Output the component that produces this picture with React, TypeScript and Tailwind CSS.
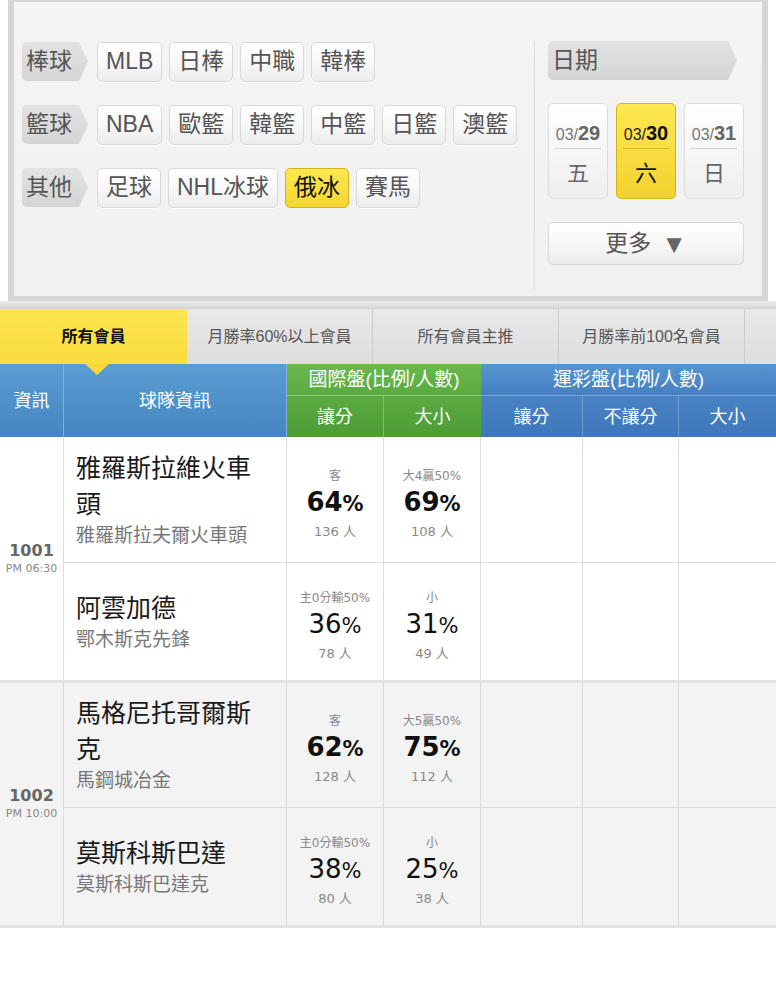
import React from "react";

const btn =
  "h-[40px] px-[8px] flex items-center justify-center border border-[#d9d9d9] rounded-[5px] bg-linear-to-b from-[#ffffff] via-[#f8f8f8] to-[#ececec] text-[23px] leading-none text-[#555] shadow-[0_1px_0_rgba(255,255,255,0.9)]";
const btnOn =
  "h-[40px] px-[8px] flex items-center justify-center border border-[#d4b21c] rounded-[5px] bg-linear-to-b from-[#fde84f] to-[#f5d531] text-[23px] leading-none text-[#111]";

function Tag({ label, wide }: { label: string; wide?: boolean }) {
  return (
    <div
      className={
        (wide ? "w-[189px] " : "w-[66px] ") +
        "h-[39px] shrink-0 flex items-center pl-[4px] bg-linear-to-b from-[#e2e2e2] to-[#d5d5d5] rounded-l-[5px] text-[23px] leading-none text-[#555] [clip-path:polygon(0_0,calc(100%-9px)_0,100%_50%,calc(100%-9px)_100%,0_100%)]"
      }
    >
      {label}
    </div>
  );
}

function Row({ label, items, active }: { label: string; items: string[]; active?: string }) {
  return (
    <div className="flex items-center gap-[7px] h-[41px]">
      <div className="mr-[2px]">
        <Tag label={label} />
      </div>
      {items.map((it) => (
        <div key={it} className={it === active ? btnOn : btn}>
          {it}
        </div>
      ))}
    </div>
  );
}

function DateBtn({ md, d, wd, on }: { md: string; d: string; wd: string; on?: boolean }) {
  return (
    <div
      className={
        "w-[60px] h-[96px] rounded-[5px] border flex flex-col overflow-hidden " +
        (on
          ? "border-[#d4b21c] bg-linear-to-b from-[#fde84f] to-[#f4d22f]"
          : "border-[#dcdcdc] bg-linear-to-b from-[#ffffff] to-[#eeeeee]")
      }
    >
      <div className="h-[44px] flex items-end justify-center pb-[5px] font-['Liberation_Sans',sans-serif] leading-none">
        <span className={"text-[16px] " + (on ? "text-[#222]" : "text-[#777]")}>{md}</span>
        <span className={"text-[20px] font-bold " + (on ? "text-[#111]" : "text-[#666]")}>{d}</span>
      </div>
      <div className={"mx-[6px] h-px " + (on ? "bg-[#d8b92a]" : "bg-[#d0d0d0]")} />
      <div className={"flex-1 flex items-center justify-center text-[22px] leading-none " + (on ? "text-[#111]" : "text-[#666]")}>
        {wd}
      </div>
    </div>
  );
}

function Pct({ label, num, cnt, bold }: { label: string; num: string; cnt: string; bold?: boolean }) {
  return (
    <div className="flex flex-col items-center justify-center pt-[8px] border-r border-[#dcdcdc] font-['DejaVu_Sans','Noto_Sans_CJK_TC',sans-serif]">
      <div className="text-[12px] leading-[16px] text-[#888]">{label}</div>
      <div className={"leading-[36px] text-[#111] " + (bold ? "font-bold" : "")}>
        <span className="text-[26px]">{num}</span>
        <span className="text-[21px]">%</span>
      </div>
      <div className="text-[13px] leading-[16px] text-[#888]">{cnt}</div>
    </div>
  );
}

function Empty({ last }: { last?: boolean }) {
  return <div className={last ? "" : "border-r border-[#dcdcdc]"} />;
}

type Team = { name: string; sub: string; a: [string, string, string]; b: [string, string, string] };

function Match({
  id,
  time,
  t1,
  t2,
  gray,
  h1,
}: {
  id: string;
  time: string;
  t1: Team;
  t2: Team;
  gray?: boolean;
  h1: string;
}) {
  const row = (t: Team, first: boolean) => (
    <div className={"grid grid-cols-[223px_97px_97px_102px_96px_97px] " + (first ? "border-b border-[#dcdcdc]" : "")}>
      <div className="flex flex-col justify-center pl-[12px] pr-[30px] border-r border-[#dcdcdc]">
        <div className="text-[25px] leading-[36px] text-[#1a1a1a]">{t.name}</div>
        <div className="text-[19px] leading-[28px] text-[#777]">{t.sub}</div>
      </div>
      <Pct label={t.a[0]} num={t.a[1]} cnt={t.a[2]} bold={first} />
      <Pct label={t.b[0]} num={t.b[1]} cnt={t.b[2]} bold={first} />
      <Empty />
      <Empty />
      <Empty last />
    </div>
  );
  return (
    <div className={"flex border-b-[3px] border-[#e2e2e2] " + (gray ? "bg-[#f3f3f3]" : "bg-white")}>
      <div className="w-[64px] shrink-0 flex flex-col items-center justify-center border-r border-[#dcdcdc] font-['DejaVu_Sans',sans-serif] text-[#666]">
        <div className="text-[16px] font-bold leading-[20px]">{id}</div>
        <div className="text-[11px] leading-[16px] text-[#888]">{time}</div>
      </div>
      <div className={"w-[712px] grid " + h1}>
        {row(t1, true)}
        {row(t2, false)}
      </div>
    </div>
  );
}

export default function App() {
  return (
    <div className="w-[776px] bg-white font-['Liberation_Sans','Noto_Sans_CJK_TC',sans-serif]">
      {/* filter panel */}
      <div className="ml-[8px] w-[760px] h-[301px] border-x-[6px] border-b-[5px] border-t-[2px] border-[#d6d6d6] bg-linear-to-b from-[#f4f4f4] to-[#f1f1f1] flex pt-[39px]">
        <div className="w-[521px] pl-[8px] flex flex-col gap-[22px] border-r border-[#dcdcdc] mb-[6px]">
          <Row label="棒球" items={["MLB", "日棒", "中職", "韓棒"]} />
          <Row label="籃球" items={["NBA", "歐籃", "韓籃", "中籃", "日籃", "澳籃"]} />
          <Row label="其他" items={["足球", "NHL冰球", "俄冰", "賽馬"]} active="俄冰" />
        </div>
        <div className="pl-[13px] flex flex-col">
          <Tag label="日期" wide />
          <div className="flex gap-[8px] mt-[23px]">
            <DateBtn md="03/" d="29" wd="五" />
            <DateBtn md="03/" d="30" wd="六" on />
            <DateBtn md="03/" d="31" wd="日" />
          </div>
          <div className="mt-[23px] w-[196px] h-[43px] flex items-center justify-center gap-[10px] border border-[#d9d9d9] rounded-[5px] bg-linear-to-b from-[#ffffff] via-[#f7f7f7] to-[#ececec] text-[23px] leading-none text-[#555]">
            <span>更多</span>
            <span className="text-[26px] text-[#666]">▼</span>
          </div>
        </div>
      </div>
      <div className="h-[8px] bg-linear-to-b from-[#ececec] to-[#d3d3d3]" />
      {/* tabs */}
      <div className="relative z-10 h-[55px] flex bg-linear-to-b from-[#e8e8e8] to-[#dedede] text-[16px] text-[#555]">
        <div className="relative w-[187px] flex items-center justify-center bg-linear-to-b from-[#fde64f] to-[#f9dc3d] font-bold text-[#111]">
          所有會員
          <div className="absolute left-[85px] -bottom-[11px] w-[24px] h-[11px] bg-[#f6d83a] [clip-path:polygon(0_0,100%_0,50%_100%)]" />
        </div>
        <div className="w-[186px] flex items-center justify-center border-r border-[#cbcbcb]">月勝率60%以上會員</div>
        <div className="w-[186px] flex items-center justify-center border-r border-[#cbcbcb]">所有會員主推</div>
        <div className="w-[186px] flex items-center justify-center border-r border-[#cbcbcb]">月勝率前100名會員</div>
        <div className="flex-1" />
      </div>
      {/* table header */}
      <div className="grid grid-cols-[64px_223px_97px_97px_102px_96px_97px] grid-rows-[32px_41px] text-white text-[18px] leading-none">
        <div className="row-span-2 flex items-center justify-center bg-linear-to-b from-[#5a9dd3] to-[#4585c0] border-r border-[#7fb0dc]">資訊</div>
        <div className="row-span-2 flex items-center justify-center bg-linear-to-b from-[#5a9dd3] to-[#4585c0] border-r border-[#7fb0dc]">球隊資訊</div>
        <div className="col-span-2 flex items-center justify-center bg-linear-to-b from-[#6ab94f] to-[#5aaa40] border-b border-[#8fcb7d] text-[19px]">國際盤(比例/人數)</div>
        <div className="col-span-3 flex items-center justify-center bg-linear-to-b from-[#5594d0] to-[#4680c2] border-b border-[#7aa6d6] text-[19px]">運彩盤(比例/人數)</div>
        <div className="flex items-center justify-center bg-linear-to-b from-[#5aab40] to-[#4f9c36] border-r border-[#7fbf6a]">讓分</div>
        <div className="flex items-center justify-center bg-linear-to-b from-[#5aab40] to-[#4f9c36]">大小</div>
        <div className="flex items-center justify-center bg-linear-to-b from-[#4883c4] to-[#3f77ba] border-r border-[#6d9bd0]">讓分</div>
        <div className="flex items-center justify-center bg-linear-to-b from-[#4883c4] to-[#3f77ba] border-r border-[#6d9bd0]">不讓分</div>
        <div className="flex items-center justify-center bg-linear-to-b from-[#4883c4] to-[#3f77ba]">大小</div>
      </div>
      <Match
        id="1001"
        time="PM 06:30"
        h1="grid-rows-[126px_117px]"
        t1={{ name: "雅羅斯拉維火車頭", sub: "雅羅斯拉夫爾火車頭", a: ["客", "64", "136 人"], b: ["大4贏50%", "69", "108 人"] }}
        t2={{ name: "阿雲加德", sub: "鄂木斯克先鋒", a: ["主0分輸50%", "36", "78 人"], b: ["小", "31", "49 人"] }}
      />
      <Match
        id="1002"
        time="PM 10:00"
        gray
        h1="grid-rows-[125px_117px]"
        t1={{ name: "馬格尼托哥爾斯克", sub: "馬鋼城冶金", a: ["客", "62", "128 人"], b: ["大5贏50%", "75", "112 人"] }}
        t2={{ name: "莫斯科斯巴達", sub: "莫斯科斯巴達克", a: ["主0分輸50%", "38", "80 人"], b: ["小", "25", "38 人"] }}
      />
      <div className="h-[72px] bg-white" />
    </div>
  );
}
